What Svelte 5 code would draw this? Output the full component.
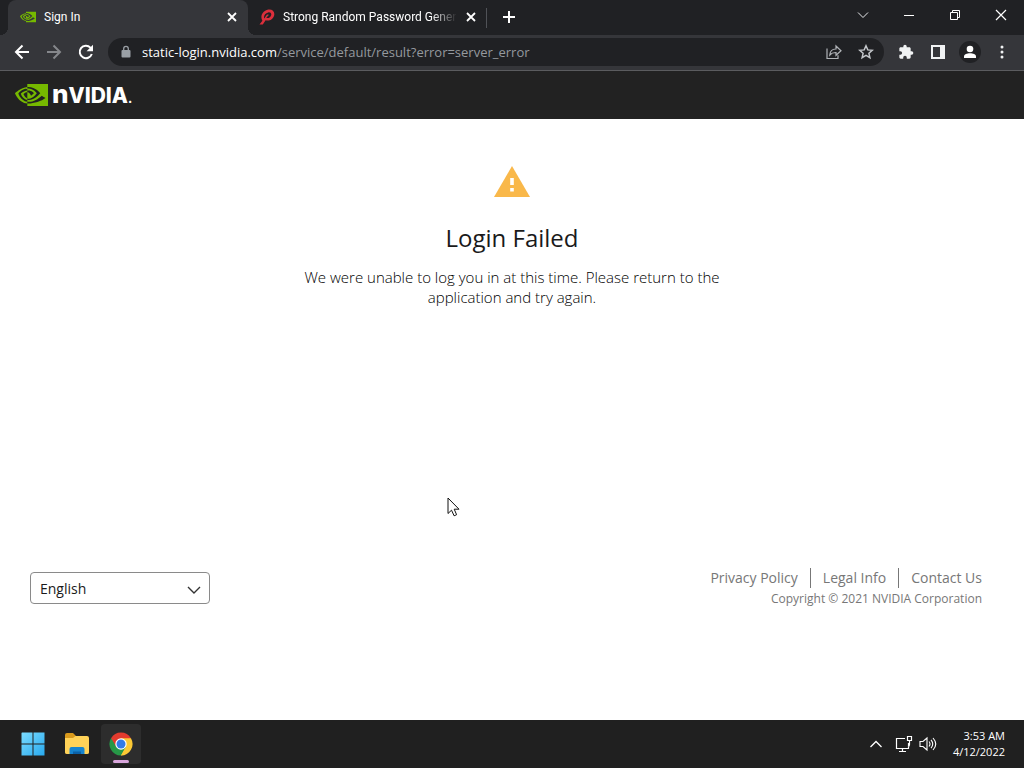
<script>
  let language = $state('English');
  let address = $state('static-login.nvidia.com/service/default/result?error=server_error');
  const host = $derived(address.split('/')[0]);
  const path = $derived(address.slice(host.length));
  const links = ['Privacy Policy', 'Legal Info', 'Contact Us'];
  const eye =
    'M8.948 8.798v-1.43a6.7 6.7 0 0 1 .424-.018c3.922-.124 6.493 3.374 6.493 3.374s-2.774 3.851-5.75 3.851c-.398 0-.787-.062-1.158-.185v-4.346c1.528.185 1.837.857 2.747 2.385l2.04-1.714s-1.492-1.952-4-1.952a6.016 6.016 0 0 0-.796.035m0-4.735v2.138l.424-.027c5.45-.185 9.01 4.47 9.01 4.47s-4.08 4.964-8.33 4.964c-.37 0-.733-.035-1.095-.097v1.325c.3.035.61.062.91.062 3.957 0 6.82-2.023 9.593-4.408.459.371 2.34 1.263 2.73 1.652-2.633 2.208-8.772 3.984-12.253 3.984-.335 0-.653-.018-.971-.053v1.864H24V4.063zm0 10.326v1.131c-3.657-.654-4.673-4.46-4.673-4.46s1.758-1.944 4.673-2.262v1.237H8.94c-1.528-.186-2.73 1.245-2.73 1.245s.68 2.412 2.739 3.11M2.456 10.9s2.164-3.197 6.5-3.533V6.201C4.153 6.59 0 10.653 0 10.653s2.35 6.802 8.948 7.42v-1.237c-4.84-.6-6.492-5.936-6.492-5.936z';
</script>

{#snippet cross()}
  <svg width="10" height="10" viewBox="0 0 10 10"><path d="M1 1l8 8M9 1L1 9" stroke="currentColor" stroke-width="1.8" /></svg>
{/snippet}

<div class="desktop">
  <div class="tabs">
    <div class="tab active">
      <svg class="favicon" width="16" height="16" viewBox="0 0 24 24"><path fill="#76b900" d={eye} /></svg>
      <span class="title">Sign In</span>
      <button class="close" aria-label="Close tab">{@render cross()}</button>
    </div>
    <div class="tab">
      <svg class="favicon" width="16" height="16" viewBox="0 0 16 16">
        <path d="M.5 15.500L3.400 11.800C1 8 3 2.200 8.500 .8C13 -.2 16 2.500 15.200 6.200C14.200 10.800 9.500 12.400 6.600 11.200L3.800 15.500zM7.300 8.800C9.300 9.600 11.700 8.300 12.200 5.900C12.600 3.900 11 3 9.200 3.400C6 4.200 4.400 7 5.200 9.400L8 5.400L10 5.800z" fill="#dc2f3c" fill-rule="evenodd" />
      </svg>
      <span class="title fade">Strong Random Password Gener</span>
      <button class="close" aria-label="Close tab">{@render cross()}</button>
    </div>
    <span class="divider"></span>
    <button class="new" aria-label="New tab">
      <svg width="12" height="12" viewBox="0 0 12 12"><path d="M6 0v12M0 6h12" stroke="#fff" stroke-width="2" /></svg>
    </button>
    <div class="window">
      <button aria-label="Search tabs"><svg width="12" height="12" viewBox="0 0 12 12"><path d="M1 3.500l5 5 5-5" fill="none" stroke="#e8eaed" /></svg></button>
      <button aria-label="Minimize"><svg width="12" height="12" viewBox="0 0 12 12"><path d="M1 6.500h10" stroke="#fff" /></svg></button>
      <button aria-label="Restore"><svg width="12" height="12" viewBox="0 0 12 12"><path d="M1.500 3.500h7v7h-7zM3.500 3.500v-2h7v7h-2" fill="none" stroke="#fff" /></svg></button>
      <button aria-label="Close"><svg width="12" height="12" viewBox="0 0 12 12"><path d="M1 1l10 10M11 1L1 11" stroke="#fff" stroke-width="1.200" /></svg></button>
    </div>
  </div>

  <div class="toolbar">
    <button aria-label="Back"><svg width="16" height="16" viewBox="0 0 16 16"><path d="M15 8H2M8.500 1.500L2 8l6.500 6.500" fill="none" stroke="#fff" stroke-width="2" /></svg></button>
    <button aria-label="Forward"><svg width="16" height="16" viewBox="0 0 16 16"><path d="M1 8h13M7.500 1.500L14 8l-6.500 6.500" fill="none" stroke="#85878b" stroke-width="2" /></svg></button>
    <button aria-label="Reload"><svg width="16" height="16" viewBox="0 0 16 16"><path d="M13.800 10A6.200 6.200 0 1 1 12.400 3.600L14 5.200" fill="none" stroke="#fff" stroke-width="2" /><path d="M15 .8v6.400H8.600z" fill="#fff" /></svg></button>
    <div class="omnibox">
      <svg width="12" height="14" viewBox="0 0 12 14"><rect x="1.500" y="5" width="9" height="7.500" rx="1" fill="#9aa0a6" /><path d="M3.700 5.500V3.700a2.300 2.300 0 0 1 4.600 0v1.800" fill="none" stroke="#9aa0a6" stroke-width="1.300" /></svg>
      <div class="url"><b>{host}</b><span>{path}</span></div>
      <button aria-label="Share"><svg width="16" height="16" viewBox="0 0 16 16"><path d="M1 4.500v10h11v-3.300M3.800 11C4 7.200 6.200 5 10 5V2l5 4.700-5 4.600V8.500C7 8.400 5.200 9.300 3.800 11z" fill="none" stroke="#b0b3b7" stroke-width="1.200" /></svg></button>
      <button aria-label="Bookmark this tab"><svg width="16" height="16" viewBox="0 0 16 16"><path d="M8 1.800l1.800 4.100 4.500.4-3.400 3 1 4.400L8 11.400l-3.900 2.300 1-4.400-3.400-3 4.500-.4z" fill="none" stroke="#c4c7cb" stroke-width="1.500" /></svg></button>
    </div>
    <button aria-label="Extensions"><svg width="16" height="16" viewBox="0 0 24 24"><path fill="#f1f3f4" d="M20.500 11H19V7c0-1.100-.9-2-2-2h-4V3.500a2.500 2.500 0 0 0-5 0V5H4c-1.100 0-2 .9-2 2v3.800h1.500a2.700 2.700 0 0 1 0 5.400H2V20c0 1.100.9 2 2 2h3.800v-1.500a2.700 2.700 0 0 1 5.400 0V22H17c1.100 0 2-.9 2-2v-4h1.500a2.500 2.500 0 0 0 0-5z" /></svg></button>
    <button aria-label="Side panel"><svg width="14" height="14" viewBox="0 0 14 14"><path fill="#f1f3f4" fill-rule="evenodd" d="M0 0h14v14H0zM2 2v10h7V2z" /></svg></button>
    <button aria-label="Profile"><svg width="22" height="22" viewBox="0 0 22 22"><circle cx="11" cy="11" r="11" fill="#202124" /><circle cx="11" cy="8" r="3.300" fill="#fff" /><path d="M5 17v-1.500c0-2 3-3.200 6-3.200s6 1.200 6 3.200V17z" fill="#fff" /></svg></button>
    <button aria-label="Menu"><svg width="4" height="14" viewBox="0 0 4 14" fill="#f1f3f4"><circle cx="2" cy="2" r="1.500" /><circle cx="2" cy="7" r="1.500" /><circle cx="2" cy="12" r="1.500" /></svg></button>
  </div>

  <header>
    <svg width="33" height="22" viewBox="0 4.063 24 15.800" preserveAspectRatio="none"><path fill="#76b900" d={eye} /></svg>
    <span class="brand"><span class="initial">n</span>VIDIA<small>.</small></span>
  </header>

  <main>
    <section>
      <svg width="36" height="31" viewBox="0 0 36 31"><path d="M18 0l18 31H0z" fill="#f9b84a" /><path d="M16.200 12h3.600v7h-3.600zM16.200 22h3.600v3.600h-3.600z" fill="#fff" /></svg>
      <h1>Login Failed</h1>
      <p>We were unable to log you in at this time. Please return to the application and try again.</p>
    </section>
    <footer>
      <div class="language">
        <select bind:value={language} aria-label="Language">
          <option>English</option>
        </select>
        <svg width="14" height="8" viewBox="0 0 14 8"><path d="M1 1l6 6 6-6" fill="none" stroke="#333" stroke-width="1.400" /></svg>
      </div>
      <div class="legal">
        <nav>
          {#each links as link}
            <a href="#top">{link}</a>
          {/each}
        </nav>
        <small>Copyright © 2021 NVIDIA Corporation</small>
      </div>
    </footer>
    <svg class="cursor" width="13" height="20" viewBox="0 0 13 20"><path d="M1 1v15.500l3.500-3.300 2.600 5.600 2.500-1.100L7.200 12.200H12z" fill="#fff" stroke="#111" /></svg>
  </main>

  <div class="taskbar">
    <button aria-label="Start">
      <svg width="24" height="24" viewBox="0 0 24 24">
        <defs><linearGradient id="win" x1="0" y1="0" x2="1" y2="1" gradientUnits="objectBoundingBox"><stop offset="0" stop-color="#7bdcff" /><stop offset="1" stop-color="#28a9ee" /></linearGradient></defs>
        <path fill="url(#win)" d="M1 .5h10.500V11.500H.5V1zM12.500 .5H23.500V11.500H12.500zM.5 12.500h11v11H.5zM12.500 12.500h11v11h-11z" />
      </svg>
    </button>
    <button aria-label="File Explorer">
      <svg width="26" height="24" viewBox="0 0 26 24">
        <path d="M1 3q0-2 2-2h6l3 3v4H1z" fill="#d99a1c" />
        <path d="M1 6h8l2.500-2H23q2 0 2 2v14.500q0 1.500-2 1.500H3q-2 0-2-1.500z" fill="#ffd258" />
        <path d="M5.500 22v-5q0-2 2-2h11q2 0 2 2v5z" fill="#1684cf" /><path d="M9 22v-2.500h8V22z" fill="#0b61a7" />
      </svg>
    </button>
    <button class="running" aria-label="Google Chrome">
      <svg width="24" height="24" viewBox="0 0 24 24">
        <path d="M12 12L2.040 6.250A11.500 11.500 0 0 1 21.960 6.250z" fill="#e33b2e" />
        <path d="M12 12L21.960 6.250A11.500 11.500 0 0 1 12 23.500z" fill="#fcc934" />
        <path d="M12 12V23.500A11.500 11.500 0 0 1 2.040 6.250z" fill="#279847" />
        <path d="M12 6.250H21.960L17 14.800z" fill="#fcc934" />
        <path d="M17 14.800L12 23.500 7 14.800z" fill="#279847" />
        <path d="M7 14.800L2.040 6.250l5-1.500L12 6.250z" fill="#e33b2e" />
        <path d="M7 14.800L2.040 6.250 4 12z" fill="#279847" /><path d="M17 14.800L12 23.500l4-1z" fill="#fcc934" />
        <circle cx="12" cy="12" r="5.700" fill="#fff" /><circle cx="12" cy="12" r="4.500" fill="#337be6" />
      </svg>
    </button>
    <div class="tray">
      <button aria-label="Show hidden icons"><svg width="12" height="8" viewBox="0 0 12 8"><path d="M.5 7L6 1.500 11.500 7" fill="none" stroke="#fff" stroke-width="1.300" /></svg></button>
      <svg width="18" height="18" viewBox="0 0 18 18" fill="none" stroke="#fff" stroke-width="1.200"><path d="M10 3.500H1.500v10h12V8M7.500 13.500v3M4 16.500h7M12.500 1.500h4v4h-4zM14.500 5.500v4q0 2-1.500 2" /></svg>
      <svg width="18" height="18" viewBox="0 0 18 18" fill="none" stroke="#fff" stroke-width="1.100"><path d="M1 6.500h3L8 3v12l-4-3.500H1zM10 6.500q2 2.500 0 5M12 4.800q3.500 4.200 0 8.400M14 3q5.500 6 0 12" /></svg>
      <time datetime="2022-04-12T03:53">3:53 AM<br />4/12/2022</time>
    </div>
  </div>
</div>

<style>
  :global(body) { margin: 0; }
  .desktop {
    display: flex;
    flex-direction: column;
    min-height: 100vh;
    font-family: "Open Sans", "Noto Sans", sans-serif;
    background: #fff;
  }
  button {
    display: grid;
    place-items: center;
    padding: 0;
    border: 0;
    background: none;
    color: #fff;
  }
  svg { display: block; flex: none; }
  .tabs { display: flex; align-items: center; height: 35px; padding-left: 8px; background: #202124; }
  .tab {
    display: flex;
    align-items: center;
    box-sizing: border-box;
    flex: 0 1 240px;
    min-width: 0;
    height: 35px;
    padding: 0 10px 2px 12px;
    gap: 8px;
    color: #fff;
    font: 12px/18px Roboto, "Open Sans", sans-serif;
  }
  .active {
    position: relative;
    border-radius: 8px 8px 0 0;
    background: #35363a;
  }
  .active::before, .active::after {
    content: "";
    position: absolute;
    bottom: 0;
    width: 8px;
    height: 8px;
  }
  .active::before { right: 100%; background: radial-gradient(circle at 0 0, #202124 8px, #35363a 8px); }
  .active::after { left: 100%; background: radial-gradient(circle at 100% 0, #202124 8px, #35363a 8px); }
  .tab:not(.active) { flex-basis: 238px; padding-left: 11px; padding-right: 9px; }
  .title { flex: 1; min-width: 0; overflow: hidden; white-space: nowrap; }
  .fade { mask-image: linear-gradient(to right, #000 85%, transparent); }
  .close { width: 12px; height: 16px; }
  .divider { width: 1px; height: 20px; background: #505257; }
  .new { width: 44px; height: 28px; padding-bottom: 2px; }
  .window { display: flex; margin-left: auto; padding-bottom: 6px; }
  .window button { width: 46px; height: 28px; }
  .toolbar {
    display: flex;
    align-items: center;
    box-sizing: border-box;
    height: 36px;
    padding: 0 6px 2px;
    background: #35363a;
    border-bottom: 1px solid #5b5c5f;
  }
  .toolbar button { width: 32px; height: 28px; flex: none; }
  .omnibox {
    display: flex;
    align-items: center;
    flex: 1;
    min-width: 0;
    height: 28px;
    margin: 0 6px;
    padding: 0 2px 0 12px;
    border-radius: 14px;
    background: #202124;
  }
  .url { flex: 1; min-width: 0; margin-left: 10px; overflow: hidden; white-space: nowrap; font-size: 13px; color: #95999e; }
  .url b { font-weight: 400; color: #fff; }
  header { display: flex; align-items: center; gap: 4px; height: 48px; padding: 0 15px; background: #222; }
  .brand { padding-top: 2px; font: 800 21px/24px Inter, sans-serif; color: #fff; }
  .brand small { font-size: 12px; }
  .initial { font-size: 26px; }
  main { position: relative; display: flex; flex-direction: column; flex: 1; }
  section { display: flex; flex-direction: column; align-items: center; padding-top: 47px; text-align: center; color: #1a1a1a; }
  h1 { margin: 24px 0 12px; font-size: 24px; line-height: 34px; font-weight: 400; }
  p { max-width: 440px; margin: 0; font-size: 15px; line-height: 20px; font-weight: 300; color: #000; }
  footer { display: flex; justify-content: space-between; align-items: center; margin-top: auto; padding: 0 42px 111px 30px; }
  .language { position: relative; }
  select {
    display: block;
    width: 180px;
    height: 32px;
    padding: 2px 9px 0;
    border: 1px solid #8a8a8a;
    border-radius: 4px;
    appearance: none;
    background: #fff;
    color: #1a1a1a;
    font: 14px/20px "Open Sans", sans-serif;
  }
  .language svg { position: absolute; right: 9px; top: 14px; pointer-events: none; }
  .legal { padding-top: 1px; color: #777; text-align: right; }
  nav { display: flex; justify-content: flex-end; }
  nav a { padding: 0 12px; border-right: 1px solid #777; color: #777; text-decoration: none; font-size: 14px; line-height: 20px; }
  nav a:last-child { padding-right: 0; border: 0; }
  .legal small { display: block; padding-top: 1px; font-size: 12px; line-height: 20px; }
  .cursor { position: absolute; left: 447px; top: 378px; }
  .taskbar { display: flex; align-items: center; height: 48px; padding-left: 13px; gap: 4px; background: #202020; }
  .taskbar > button { width: 40px; height: 40px; }
  .taskbar > .running { position: relative; border-radius: 4px; background: #2d2d2d; }
  .running::after { content: ""; position: absolute; left: 12px; bottom: 1px; width: 16px; height: 3px; border-radius: 2px; background: #d9a6dc; }
  .tray { display: flex; align-items: center; gap: 6px; margin-left: auto; padding-right: 19px; color: #fff; }
  .tray button { width: 26px; height: 32px; }
  time { margin-left: 10px; font-size: 11px; line-height: 16px; text-align: right; }
</style>
